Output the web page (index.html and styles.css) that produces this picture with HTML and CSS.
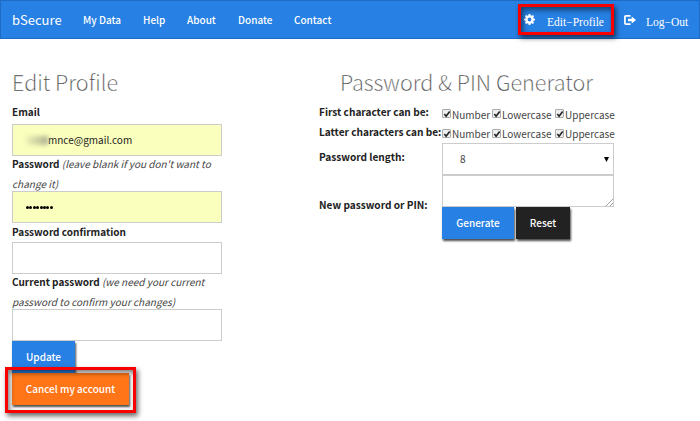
FILE: index.html
```html
<!DOCTYPE html>
<html lang="en">
<head>
<meta charset="utf-8">
<title>bSecure</title>
<link rel="stylesheet" href="styles.css">
</head>
<body>
<nav class="navbar">
  <a class="brand">bSecure</a>
  <a class="n-data">My Data</a>
  <a class="n-help">Help</a>
  <a class="n-about">About</a>
  <a class="n-donate">Donate</a>
  <a class="n-contact">Contact</a>
  <div class="account">
    <svg class="gear" viewBox="0 0 16 16" width="11" height="11"><path fill="#fff" fill-rule="evenodd" d="M6.8 0h2.4l.5 2.2 1.3.5 1.9-1.2 1.7 1.7-1.2 1.9.5 1.3 2.1.4v2.4l-2.1.5-.5 1.3 1.2 1.9-1.7 1.7-1.9-1.2-1.3.5L9.2 16H6.8l-.5-2.1L5 13.4l-1.900 1.200-1.700-1.700L2.600 11l-.5-1.300L0 9.200V6.800l2.100-.4.500-1.300-1.200-1.900 1.700-1.700L5 2.700l1.300-.5zM8 5.200a2.800 2.800 0 1 0 0 5.600 2.800 2.800 0 0 0 0-5.600z"/></svg>
    <a class="serif edit">Edit&minus;Profile</a>
    <svg class="logout" viewBox="0 0 12 10" width="12" height="10"><path fill="none" stroke="#fff" stroke-width="1.700" d="M6.500.9H2Q.9.900.900 2v6Q.900 9.100 2 9.100h4.500"/><path fill="#fff" d="M4 3.700h3.700V1.400L12 5 7.700 8.600V6.300H4z"/></svg>
    <a class="serif out">Log&minus;Out</a>
  </div>
  <span class="mark mark-edit"></span>
</nav>
<main>
  <section class="profile">
    <h1>Edit Profile</h1>
    <label class="l-email"><b>Email</b></label>
    <div class="field filled"><span class="blurred"></span>mnce@gmail.com</div>
    <label class="two"><b>Password</b> <i>(leave blank if you don't want to<br>change it)</i></label>
    <div class="field filled dots"><span></span><span></span><span></span><span></span><span></span><span></span><span></span><span></span></div>
    <label class="one"><b>Password confirmation</b></label>
    <div class="field"></div>
    <label class="two"><b>Current password</b> <i>(we need your current<br>password to confirm your changes)</i></label>
    <div class="field"></div>
    <button class="blue update">Update</button>
    <div class="cancel-wrap"><button class="orange">Cancel my account</button><span class="mark mark-cancel"></span></div>
  </section>
  <section class="generator">
    <h1>Password &amp; PIN Generator</h1>
    <div class="row"><b>First character can be:</b>
      <div class="checks"><span class="check"><svg viewBox="0 0 9 9"><path d="M1.500 4.500 3.500 7 7.500 1.800"/></svg></span><em class="num">Number</em><span class="check"><svg viewBox="0 0 9 9"><path d="M1.500 4.500 3.500 7 7.500 1.800"/></svg></span><em class="low">Lowercase</em><span class="check"><svg viewBox="0 0 9 9"><path d="M1.500 4.500 3.500 7 7.500 1.800"/></svg></span><em>Uppercase</em></div></div>
    <div class="row second"><b>Latter characters can be:</b>
      <div class="checks"><span class="check"><svg viewBox="0 0 9 9"><path d="M1.500 4.500 3.500 7 7.500 1.800"/></svg></span><em class="num">Number</em><span class="check"><svg viewBox="0 0 9 9"><path d="M1.500 4.500 3.500 7 7.500 1.800"/></svg></span><em class="low">Lowercase</em><span class="check"><svg viewBox="0 0 9 9"><path d="M1.500 4.500 3.500 7 7.500 1.800"/></svg></span><em>Uppercase</em></div></div>
    <div class="row tall"><b class="len">Password length:</b>
      <div class="select"><span>8</span><svg width="5" height="5" viewBox="0 0 5 5"><path d="M0 0h5L2.500 5z"/></svg></div></div>
    <div class="row tall"><b class="new">New password or PIN:</b>
      <div class="area"><svg width="7" height="7" viewBox="0 0 7 7"><path d="M0 7 7 0M4 7 7 4" stroke="#888" stroke-width=".8"/></svg></div></div>
    <div class="buttons"><button class="blue generate">Generate</button><button class="black">Reset</button></div>
  </section>
</main>
</body>
</html>
```

FILE: styles.css
```css
* { box-sizing: border-box; }
body {
  margin: 0;
  width: 700px;
  height: 421px;
  overflow: hidden;
  background: #fff;
  color: #222;
  font: 10px/19.5px "Noto Sans CJK SC", "Open Sans", sans-serif;
}
.navbar {
  position: relative;
  display: flex;
  align-items: center;
  height: 39px;
  padding: 2px 11px 2px;
  background: #2780e3;
  border: 1px solid #1f6bc4;
  color: #fff;
  font-weight: 500;
  white-space: nowrap;
}
.brand { width: 71px; font-size: 13px; font-weight: 400; }
.n-data { width: 60px; }
.n-help { width: 44px; }
.n-about { width: 51px; }
.n-donate { width: 56px; }
.account { display: flex; align-items: center; margin-left: auto; }
.serif { font: 11.5px/20px "Liberation Serif", serif; padding-top: 4px; }
.gear { margin-right: 12px; }
.edit { width: 77px; }
.logout { margin-right: 10px; }
.out { width: 42px; }
.mark {
  position: absolute;
  border: 3px solid #f80000;
  box-shadow: 2px 3px 5px rgba(0,0,0,.6), inset 2px 3px 5px rgba(0,0,0,.5);
}
.mark-edit { left: 517px; top: 3px; width: 96px; height: 31px; }
.mark-cancel { left: -7px; top: -6px; width: 131px; height: 46px; }
main { display: flex; padding-left: 12px; }
.profile { width: 210px; margin-right: 97px; }
h1 {
  margin: 0;
  height: 63px;
  padding-top: 28px;
  font-size: 21.6px;
  line-height: 30px;
  font-weight: 300;
  color: #333;
  -webkit-text-stroke: .35px #fff;
  white-space: nowrap;
}
label { display: block; white-space: nowrap; }
.row > b { font-size: 10.1px; }
label i { color: #444; }
.l-email { height: 22px; }
.two { height: 39px; margin: -2px 0; }
.one { height: 19px; margin-top: -1px; margin-bottom: 1px; }
.field {
  display: flex;
  align-items: center;
  height: 32px;
  padding-left: 13px;
  border: 1px solid #ccc;
}
.filled { background: #faffbd; }
.blurred {
  width: 22px;
  height: 9px;
  background: linear-gradient(90deg, #edf1b6, #c9cd9f 60%, #a9ad8c);
  filter: blur(2px);
}
.dots span { width: 3px; height: 3px; margin-right: .4px; border-radius: 50%; background: #000; }
button {
  display: block;
  height: 32px;
  padding: 0 0 1px;
  border: 0;
  color: #fff;
  font: 500 10px/20px "Noto Sans CJK SC", sans-serif;
  box-shadow: 1px 2px 2px rgba(0,0,0,.7);
}
.blue { background: #2780e3; }
.black { background: #222; width: 54px; }
.update { width: 63px; }
.orange { width: 117px; background: #ff7518; }
.cancel-wrap { position: relative; }
.generator { width: 295px; }
.generator h1 { text-align: center; }
.row { display: flex; height: 19.5px; white-space: nowrap; }
.row > b { flex: 0 0 123px; }
.second { height: 21.5px; }
.checks { display: flex; align-items: center; height: 25px; }
.checks em { font-style: normal; color: #444; }
.check {
  flex: none;
  width: 9px;
  height: 9px;
  margin: -2px 1px 0 0;
  border: 1px solid #aaa;
  border-radius: 1px;
  background: #eee;
}
.check svg { display: block; width: 8px; height: 8px; }
.check path { fill: none; stroke: #222; stroke-width: 1.800; }
.num { width: 40px; }
.low { width: 53px; }
.tall { height: 32px; }
.tall .len { padding-top: 4px; }
.tall .new { padding-top: 20px; }
.select, .area { width: 172px; height: 32px; border: 1px solid #ccc; }
.select { display: flex; align-items: center; justify-content: space-between; padding: 0 4px 0 17px; color: #444; }
.area { display: flex; align-items: flex-end; justify-content: flex-end; }
.buttons { display: flex; gap: 2px; margin-left: 123px; }
.generate { width: 72px; }
```
